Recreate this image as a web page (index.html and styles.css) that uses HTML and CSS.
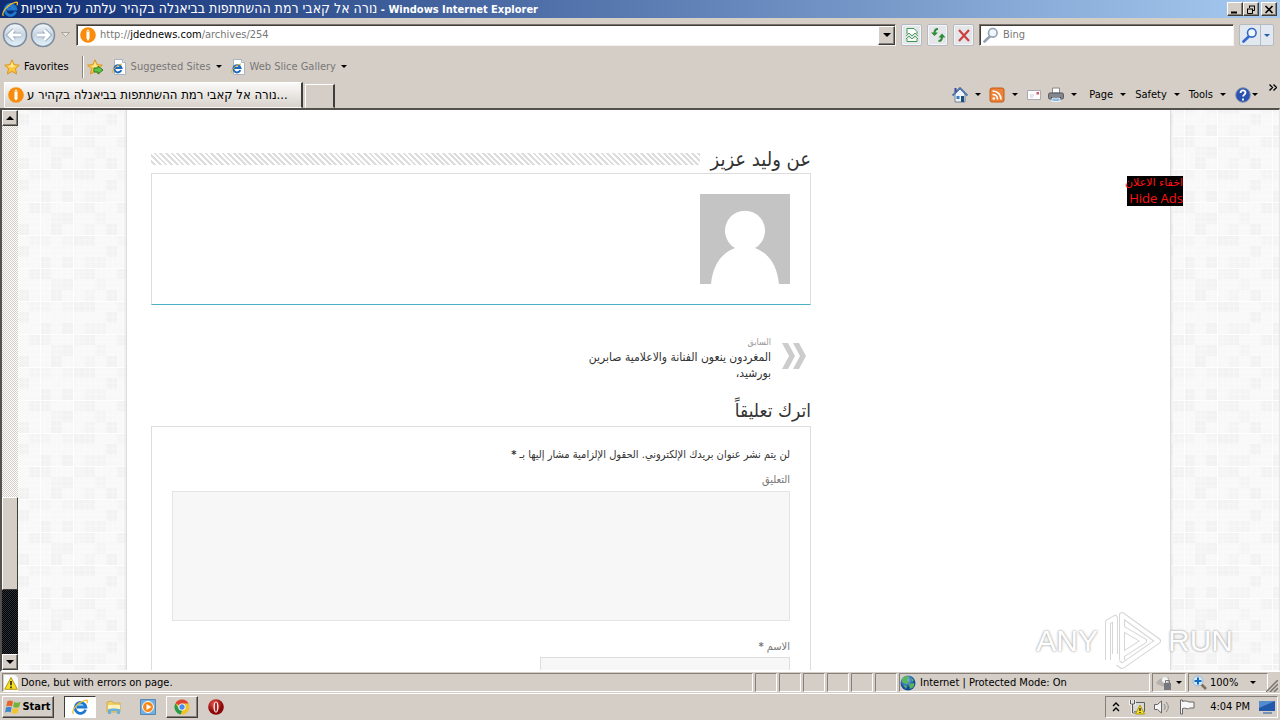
FILE: index.html
```html
<!DOCTYPE html>
<html lang="en">
<head>
<meta charset="utf-8">
<title>Windows Internet Explorer</title>
<link rel="stylesheet" href="styles.css">
</head>
<body>
<svg class="defs" width="0" height="0" aria-hidden="true">
  <defs>
    <linearGradient id="orb" x1="0" y1="0" x2="0" y2="1"><stop offset="0" stop-color="#f4f7fa"/><stop offset=".5" stop-color="#c4d3e0"/><stop offset="1" stop-color="#e4f3fb"/></linearGradient>
    <radialGradient id="globeFill" cx=".4" cy=".3"><stop offset="0" stop-color="#8fd0f5"/><stop offset="1" stop-color="#124a9c"/></radialGradient>
    <radialGradient id="redFill" cx=".4" cy=".3"><stop offset="0" stop-color="#f05a50"/><stop offset="1" stop-color="#8c0808"/></radialGradient>
    <symbol id="ie" viewBox="0 0 16 16">
      <path d="M13.6 10.6A5.4 5.4 0 1 1 13.8 8H5" fill="none" stroke="#1c78d0" stroke-width="2.8"/>
      <path d="M5 7.4C6 5 10.500 5 11.400 7.400" fill="none" stroke="#55b4f0" stroke-width="1"/>
      <path d="M1.500 14.800C-1 12 5 3 14.500 1.200C16 1.200 15.600 3 14.800 4.200" fill="none" stroke="#f2bf28" stroke-width="1.300"/>
    </symbol>
    <symbol id="iepage" viewBox="0 0 16 16">
      <path d="M3.500.5h8l3 3v12h-11z" fill="#fff" stroke="#a9b4c0"/><path d="M11.500.5v3h3" fill="#dde6ee" stroke="#a9b4c0"/>
      <path d="M10.300 11.200A3.600 3.600 0 1 1 10.500 9H4.500" fill="none" stroke="#1d67bd" stroke-width="2"/>
      <path d="M2 14C0 12 5 6 11 5" fill="none" stroke="#e8b52c"/>
    </symbol>
    <symbol id="site" viewBox="0 0 16 16"><circle cx="8" cy="8" r="7.800" fill="#f98c0c"/><path d="M8 2.300l1.500 2v7L8 14l-1.500-2.700v-7z" fill="#fff"/><path d="M6.500 4.500h3" stroke="#f98c0c" stroke-width=".6"/></symbol>
    <symbol id="star" viewBox="0 0 16 16"><path d="M8 .8l2.200 4.800 5.200.6-3.900 3.500 1.100 5.300L8 12.400 3.400 15l1.100-5.300L.6 6.200l5.200-.6z" fill="#fbc63e" stroke="#d9962a"/><path d="M8 3l1.300 3.500 3 .4-5 1.500-3.500-1.500 3-.4z" fill="#ffed9a"/></symbol>
    <symbol id="mag" viewBox="0 0 16 16"><path d="M6.800 9.500L1.500 14.500" stroke="currentColor" stroke-width="2.600" stroke-linecap="round"/><circle cx="9.800" cy="5.800" r="4.300" fill="#f0f7fc" stroke="currentColor" stroke-width="1.600"/></symbol>
    <symbol id="warn" viewBox="0 0 16 16"><path d="M3 0h9l3 3v13H1V0z" fill="#fafafa"/><path d="M8 2.500l6.300 11.800H1.700z" fill="#f8df26" stroke="#b39a10"/><path d="M8 6v4.300M8 11.500v1.700" stroke="#222" stroke-width="1.600"/></symbol>
  </defs>
</svg>

<header class="titlebar">
  <svg class="i16"><use href="#ie"/></svg>
  <h1 class="window-title"><span>נורה אל קאבי רמת ההשתתפות בביאנלה בקהיר עלתה על הציפיות</span> - Windows Internet Explorer</h1>
  <div class="window-buttons">
    <button aria-label="Minimize"><svg width="10" height="9"><path d="M1 7.500h6" stroke="#000" stroke-width="2"/></svg></button>
    <button aria-label="Restore"><svg width="10" height="9"><path d="M3 1h6M3.500 1v2M8.500 1v4.500H7M1 4h6M1.500 4v4.500h5V4" fill="none" stroke="#000"/></svg></button>
    <button class="close" aria-label="Close"><svg width="10" height="9"><path d="M1.500 1l7 7M8.500 1l-7 7" stroke="#000" stroke-width="1.600"/></svg></button>
  </div>
</header>

<nav class="navbar">
  <div class="travel">
    <button aria-label="Back"><svg width="26" height="26" viewBox="0 0 26 26"><circle cx="13" cy="13" r="11.500" fill="url(#orb)" stroke="#7c8c9e" stroke-width="1.500"/><path d="M19 13H7M12 8l-5 5 5 5" fill="none" stroke="#8fa5ba" stroke-width="4.500"/><path d="M19 13H8M12 8l-5 5 5 5" fill="none" stroke="#fff" stroke-width="2.800"/></svg></button>
    <button aria-label="Forward"><svg width="26" height="26" viewBox="0 0 26 26"><circle cx="13" cy="13" r="11.500" fill="url(#orb)" stroke="#7c8c9e" stroke-width="1.500"/><path d="M7 13h12M14 8l5 5-5 5" fill="none" stroke="#8fa5ba" stroke-width="4.500"/><path d="M7 13h11M14 8l5 5-5 5" fill="none" stroke="#fff" stroke-width="2.800"/></svg></button>
    <button class="recent" aria-label="Recent pages"><svg width="9" height="6"><path d="M.5.5h8l-4 4z" fill="#e8e4de" stroke="#aaa49c"/></svg></button>
  </div>
  <div class="address sunken">
    <svg class="i16"><use href="#site"/></svg>
    <a class="url" href="#">http://<b>jdednews.com</b>/archives/254</a>
    <button class="drop" aria-label="Show addresses"><i class="arrow"></i></button>
  </div>
  <button class="tool" aria-label="Compatibility view"><svg class="i16" viewBox="0 0 16 16"><path d="M3 7V1.500h7l3 3V7M3 12v2.500h10V12" fill="#fff" stroke="#3b9a4b"/><path d="M2 9l3-3 3 3 3-3 3 3M2 12l3-3 3 3 3-3 3 3" fill="none" stroke="#48a258"/></svg></button>
  <button class="tool" aria-label="Refresh"><svg class="i16" viewBox="0 0 16 16"><path d="M8 2C5 2 4.500 3.500 4.500 6" fill="none" stroke="#2e8c38" stroke-width="2"/><path d="M1 5.500h7L4.500 9z" fill="#2e8c38"/><path d="M8.500 14c3 0 3.500-2 3.500-4.500" fill="none" stroke="#2e8c38" stroke-width="2"/><path d="M8.500 10.500h7L12 6.500z" fill="#2e8c38"/></svg></button>
  <button class="tool" aria-label="Stop"><svg class="i16" viewBox="0 0 16 16"><path d="M3 3l10 11M13 3L3 14" stroke="#cc4040" stroke-width="2.200"/></svg></button>
  <label class="search sunken"><svg class="i16 pale"><use href="#mag"/></svg><input type="text" placeholder="Bing" aria-label="Search"></label>
  <div class="find">
    <button aria-label="Search"><svg class="i16"><use href="#mag"/></svg></button>
    <button class="more" aria-label="Search options"><i class="arrow blue"></i></button>
  </div>
</nav>

<div class="favbar">
  <button class="flat"><svg class="i16"><use href="#star"/></svg>Favorites</button>
  <div class="favlinks">
    <button class="flat" aria-label="Add to Favorites Bar"><svg class="i16" viewBox="0 0 16 16"><use href="#star"/><path d="M7 9h4V7l5 4-5 4v-2H7z" fill="#5fc44c" stroke="#2b8126"/></svg></button>
    <button class="flat grey"><svg class="i16"><use href="#iepage"/></svg>Suggested Sites<i class="arrow"></i></button>
    <button class="flat grey"><svg class="i16"><use href="#iepage"/></svg>Web Slice Gallery<i class="arrow"></i></button>
  </div>
</div>

<div class="tabbar">
  <button class="tab"><svg class="i16"><use href="#site"/></svg><span>נורה אל קאבי רמת ההשתתפות בביאנלה בקהיר ע...</span></button>
  <button class="newtab" aria-label="New tab"></button>
  <div class="commands">
    <button class="flat" aria-label="Home"><svg class="i16" viewBox="0 0 16 16"><path d="M3 7v8h10V7L8 2z" fill="#eef3f8" stroke="#6f8099"/><path d="M.5 8.500L8 1l7.500 7.500" fill="none" stroke="#4d74ab" stroke-width="1.800"/><path d="M2.500 1h2v4h-2z" fill="#394aa0"/><path d="M4.500 9h3v3h-3z" fill="#377bc1"/><path d="M9 9h3v6H9z" fill="#194f78"/></svg><i class="arrow"></i></button>
    <button class="flat" aria-label="Feeds"><svg class="i16" viewBox="0 0 16 16"><rect x="1" y="1" width="14" height="14" rx="2" fill="#ed8236" stroke="#c45c18"/><circle cx="4.800" cy="11.500" r="1.300" fill="#fff"/><path d="M3.500 7.500c3 0 5 2 5 5M3.500 4c5 0 8.500 3.500 8.500 8.500" fill="none" stroke="#fff" stroke-width="1.600"/></svg><i class="arrow"></i></button>
    <button class="flat" aria-label="Read mail"><svg class="i16" viewBox="0 0 16 16"><path d="M1.500 3.500h13v9h-13z" fill="#fcfcfc" stroke="#a9a9af"/><path d="M10.500 5h2.500v2.500h-2.500z" fill="#cf5c6c"/><path d="M4 8h4M4 10h3" stroke="#c6ccd8"/></svg></button>
    <button class="flat print" aria-label="Print"><svg class="i16" viewBox="0 0 16 16"><path d="M4.500 1h7v5h-7z" fill="#fff" stroke="#888"/><rect x=".5" y="6" width="15" height="6" rx="1.500" fill="#83868c" stroke="#55585e"/><path d="M3 10h10v2.500H3z" fill="#30353b"/><path d="M4 11h8v3.500H4z" fill="#87bce6" stroke="#eee"/></svg><i class="arrow"></i></button>
    <button class="flat text">Page<i class="arrow"></i></button>
    <button class="flat text">Safety<i class="arrow"></i></button>
    <button class="flat text">Tools<i class="arrow"></i></button>
    <button class="flat help" aria-label="Help"><svg class="i16" viewBox="0 0 16 16"><circle cx="8" cy="8" r="7.300" fill="#2a52b0" stroke="#8491ad"/><path d="M5.500 6c0-3.300 5-3.300 5-.4 0 2-2.400 2-2.400 4M8 11.500v2" fill="none" stroke="#fff" stroke-width="1.800"/></svg><i class="arrow"></i></button>
    <button class="flat chevron" aria-label="More commands"><svg width="8" height="7"><path d="M.5.500l3 3-3 3M4.500.5l3 3-3 3" fill="none" stroke="#000" stroke-width="1.300"/></svg></button>
  </div>
</div>

<main class="viewport">
  <div class="scrollbar" aria-hidden="true">
    <span class="sb-button"><i class="arrow up"></i></span>
    <span class="sb-track"></span>
    <span class="sb-thumb"></span>
    <span class="sb-pressed"></span>
    <span class="sb-button"><i class="arrow"></i></span>
  </div>
  <div class="page">
    <svg class="texture" width="100%" height="100%" aria-hidden="true">
      <defs><pattern id="tiles" width="88" height="66" patternUnits="userSpaceOnUse" x="22" y="26">
        <rect width="88" height="66" fill="#f8f8f8"/>
        <path d="M0 0h11v11H0zM22 11h11v11H22zM44 0h11v11H44zM66 22h11v11H66zM11 22h11v11H11zM33 33h22v11H33zM0 55h11v11H0zM66 44h11v11H66zM22 55h11v11H22zM77 0h11v11H77z" fill="#f2f2f2"/>
        <path d="M11 11h11v11H11zM33 0h11v11H33zM55 11h11v11H55zM44 22h11v11H44zM0 33h11v11H0zM55 55h11v11H55zM22 33h11v11H22zM77 33h11v11H77zM44 55h11v11H44z" fill="#f4f4f4"/>
        <path d="M0 .5h88M0 33.500h88M.5 0v66M33.500 0v66" stroke="#fefefe"/>
        <path d="M0 4h88M0 8h88M0 15h88M0 20h88M0 26h88M0 38h88M0 43h88M0 49h88M0 54h88M0 60h88M5 0v66M10 0v66M17 0v66M22 0v66M28 0v66M39 0v66M45 0v66M50 0v66M56 0v66M62 0v66M67 0v66M73 0v66M78 0v66M83 0v66" stroke="#fff" stroke-opacity=".3"/>
      </pattern></defs>
      <rect width="100%" height="100%" fill="url(#tiles)"/>
    </svg>
    <div class="sheet">
      <article class="column" dir="rtl" lang="ar">
        <section>
          <div class="heading"><h2>عن وليد عزيز</h2><span class="stripes"></span></div>
          <div class="box author">
            <svg width="90" height="90" viewBox="0 0 90 90" role="img" aria-label="وليد عزيز"><path fill="#c4c4c4" d="M0 0h90v90H0z"/><path fill="#fff" d="M11 90C13 70 22 59 35 54a20 20 0 1 1 20 0C68 59 77 70 79 90z"/></svg>
          </div>
        </section>
        <a class="previous" href="#">
          <svg width="26" height="28" viewBox="0 0 26 28"><path d="M1 1h6l7 13-7 13H1l7-13zM12 1h6l7 13-7 13h-6l7-13z" fill="#ccc"/></svg>
          <span><small>السابق</small>المغردون ينعون الفنانة والاعلامية صابرين بورشيد،</span>
        </a>
        <section>
          <h2 class="reply">اترك تعليقاً</h2>
          <form class="box comment">
            <p>لن يتم نشر عنوان بريدك الإلكتروني. الحقول الإلزامية مشار إليها بـ <b>*</b></p>
            <label for="comment">التعليق</label>
            <textarea id="comment"></textarea>
            <label for="author">الاسم <b>*</b></label>
            <input id="author" type="text">
          </form>
        </section>
      </article>
    </div>
    <button class="hide-ads"><span lang="ar">اخفاء الاعلان</span><span>Hide Ads</span></button>
    <div class="watermark"><span>ANY</span>
      <svg width="58" height="62" viewBox="0 0 58 62"><path d="M4 50V12l7-4v36M18 50V5l36 26-36 25-4-3M18 18l22 13-22 14" fill="none" stroke="#d2d2d2" stroke-width="6" stroke-linejoin="round"/><path d="M4 50V12l7-4v36M18 50V5l36 26-36 25-4-3M18 18l22 13-22 14" fill="none" stroke="#fff" stroke-width="4" stroke-linejoin="round"/></svg>
      <span>RUN</span></div>
  </div>
</main>

<footer class="statusbar">
  <div class="pane grow"><svg class="i16"><use href="#warn"/></svg>Done, but with errors on page.</div>
  <div class="pane"></div><div class="pane"></div><div class="pane"></div><div class="pane"></div><div class="pane"></div><div class="pane"></div>
  <div class="pane zone"><svg class="i16" viewBox="0 0 16 16"><circle cx="8" cy="8" r="7.500" fill="url(#globeFill)"/><path d="M2 4c3-4 6-3 7-2L7 5l2 2-3 2-4-2zM9 9l5-1c1 3-1 5-4 6zM11 3l3 2-2 2zM3 10l4 1-1 3z" fill="#59b65b"/></svg>Internet | Protected Mode: On</div>
  <button class="pane lock" aria-label="Privacy"><svg class="i16" viewBox="0 0 16 16"><path d="M0 8C3 3 8 2 13 2v11C9 11 4 12 0 8z" fill="#b6b3ae"/><circle cx="9" cy="5" r="3" fill="#f5f5f5"/><path d="M8 8h7v7H8z" fill="#75797e"/><path d="M9.500 8V5.500h4V8" fill="none" stroke="#777"/></svg><i class="arrow"></i></button>
  <button class="pane zoom"><svg class="i16" viewBox="0 0 16 16"><path d="M9 9l5 5" stroke="#806f54" stroke-width="2.500"/><circle cx="6" cy="6" r="5" fill="#d3e9fb" stroke="#9fb9d3"/><path d="M6 2.500v7M2.500 6h7" stroke="#126bc2" stroke-width="2"/></svg>100%<i class="arrow"></i></button>
  <svg class="grip" width="12" height="12"><path d="M0 12L12 0M4 12l8-8M8 12l4-4" stroke="#77736d" stroke-width="1.500"/></svg>
</footer>

<footer class="taskbar">
  <button class="start"><svg class="i16" viewBox="0 0 16 16"><path d="M2.500 2C5 1 6 1.500 8 2.500L7 7.500C5 6.500 3.500 6.500 1.200 7.500z" fill="#e5652b"/><path d="M9 3c2 1 4 1 6.500 0l-1.300 5c-2.500 1-4 1-6 0z" fill="#74b33a"/><path d="M1 8.500c2.500-1 3.800-1 5.700 0l-1.200 5C4 12.500 2 12.700 0 13.500z" fill="#3f86d0"/><path d="M7.700 9c2 1 3.500 1 6.200 0l-1.300 5c-2.500 1-4.200 1-6.100 0z" fill="#f4c430"/></svg>Start</button>
  <button class="task active" aria-label="Internet Explorer"><svg class="i16"><use href="#ie"/></svg></button>
  <button class="task" aria-label="Explorer"><svg class="i16" viewBox="0 0 16 16"><path d="M1 3l5-1 1 2h7v9H1z" fill="#efcf6c" stroke="#d3ac46"/><path d="M2 6h12v4H2z" fill="#fff2b8"/><path d="M2 15v-4c0-2 12-2 12 0v4h-3v-3H5v3z" fill="#65b0e0"/></svg></button>
  <button class="task" aria-label="Media Player"><svg class="i16" viewBox="0 0 16 16"><path d="M.5.5h15v15H.5z" fill="#70b0e5" stroke="#5687b5"/><circle cx="8" cy="8" r="5.500" fill="#f68718" stroke="#fff"/><path d="M6.500 5l5 3-5 3z" fill="#fff"/></svg></button>
  <button class="task raised" aria-label="Chrome"><svg class="i16" viewBox="0 0 16 16"><circle cx="8" cy="8" r="7.500" fill="#efc427"/><path d="M8 8L1.500 4.200A7.500 7.500 0 0 1 14.500 4.500H8z" fill="#dd4437"/><path d="M1.500 4.200L5 10l3 2-1.500 3.400A7.500 7.500 0 0 1 1.500 4.200z" fill="#279c51"/><circle cx="8" cy="8" r="3.600" fill="#fff"/><circle cx="8" cy="8" r="2.700" fill="#4b8cf0"/></svg></button>
  <button class="task" aria-label="Opera"><svg class="i16" viewBox="0 0 16 16"><circle cx="8" cy="8" r="7.800" fill="url(#redFill)"/><ellipse cx="8" cy="8" rx="2.500" ry="5.500" fill="#fff"/><ellipse cx="8" cy="8" rx="1.200" ry="4.800" fill="#b52424"/></svg></button>
  <div class="tray">
    <svg width="8" height="10"><path d="M1 4l3-3 3 3M1 9l3-3 3 3" fill="none" stroke="#000" stroke-width="1.400"/></svg>
    <svg class="i16" viewBox="0 0 16 16"><path d="M4.500 3.500h11v9h-11z" fill="#d9d9d6" stroke="#5d5d5d"/><path d="M1.500 1v4h4V1M3.500 5v9h5" fill="none" stroke="#fff" stroke-width="2.400"/><path d="M1.500 1v4h4V1M3.500 5v9h5" fill="none" stroke="#555"/><path d="M11 6l4.500 9h-9z" fill="#f7df2e" stroke="#ae980b"/><path d="M11 9v3M11 13v1" stroke="#222" stroke-width="1.300"/></svg>
    <svg class="i16" viewBox="0 0 16 16"><path d="M.5 5.500h3L7.500 2v12l-4-3.500h-3z" fill="#f4f4f4" stroke="#666"/><path d="M10 5c1.500 2 1.500 4 0 6M12 3c3 3 3 7 0 10" fill="none" stroke="#888"/></svg>
    <svg class="i16" viewBox="0 0 16 16"><path d="M1.500 1v14h2V9.500c3-1 4 .5 6 .5l1-1h4.500V3H10c-2-1-4-1.500-6.500-.5V1z" fill="#f7f7f7" stroke="#666"/></svg>
    <time>4:04 PM</time>
    <svg class="i16" viewBox="0 0 16 16"><path d="M0 2h16v10H0z" fill="#2359aa"/><path d="M0 2h16L0 9z" fill="#538cce"/><path d="M4 13h9v2H4z" fill="#7693b5"/></svg>
  </div>
</footer>
</body>
</html>
```

FILE: styles.css
```css
* { box-sizing: border-box; }
body {
  margin: 0;
  height: 100vh;
  display: flex;
  flex-direction: column;
  overflow: hidden;
  background: #d5cec7;
  color: #000;
  font: 11px/14px "DejaVu Sans Condensed", "DejaVu Sans", sans-serif;
}
button, input, textarea { font: inherit; color: inherit; }
button { padding: 0; border: 0; background: none; display: flex; align-items: center; justify-content: center; white-space: nowrap; }
svg { flex: none; display: block; }
.defs { position: absolute; }
.i16 { width: 16px; height: 16px; }
.sunken { background: #fff; border: 1px solid; border-color: #77736b #f5f3ef #f5f3ef #77736b; box-shadow: inset 1px 1px #403e3a; }

.arrow { width: 0; height: 0; border: 3px solid transparent; border-top-color: #000; border-bottom: 0; }
.arrow.blue { border-top-color: #2360a8; }
.arrow.up { border: 4px solid transparent; border-top: 0; border-bottom-color: #000; }

.titlebar { display: flex; align-items: center; flex: none; height: 18px; padding: 0 3px 0 2px; gap: 3px; background: linear-gradient(90deg, #0f2d74, #a6caf0); color: #fff; }
.window-title { margin: 0; flex: 1; font-size: 11px; line-height: 16px; font-weight: bold; white-space: nowrap; }
.window-title span { font-size: 14px; font-weight: normal; }
.window-buttons { display: flex; }
.window-buttons button, .sb-button, .drop, .start, .raised { background: #d5cec7; border: 1px solid; border-color: #fff #403e3a #403e3a #fff; box-shadow: inset -1px -1px #85817a; }
.window-buttons button { width: 16px; height: 14px; }
.window-buttons .close { margin-left: 2px; }

.navbar { display: flex; align-items: center; flex: none; height: 34px; padding: 0 6px 0 2px; gap: 5px; }
.travel { display: flex; align-items: center; gap: 2px; width: 69px; flex: none; }
.recent { margin-left: 3px; }
.address { flex: 1; display: flex; align-items: center; height: 22px; padding-left: 3px; gap: 4px; }
.url { flex: 1; color: #777; text-decoration: none; }
.url b { font-weight: normal; color: #000; }
.drop { width: 17px; height: 19px; }
.drop .arrow { border-width: 4px 4px 0; }
.tool { width: 21px; height: 22px; border: 1px solid #b5bac2; border-radius: 2px; background: #e5e6e9; box-shadow: inset 0 0 0 1px #f5f6f8; }
.search { width: 255px; height: 22px; display: flex; align-items: center; gap: 4px; padding-left: 3px; }
.search input { flex: 1; min-width: 0; border: 0; padding: 0; outline: 0; background: transparent; }
.search input::placeholder { color: #777; opacity: 1; }
.pale { color: #93a2b4; }
.find { display: flex; height: 22px; border: 1px solid #b5bac2; border-radius: 2px; background: #e2e8f0; color: #3268ca; }
.find button { width: 20px; }
.find .more { width: 13px; border-left: 1px solid #b5bac2; }

.favbar { display: flex; align-items: center; flex: none; height: 29px; padding-left: 4px; gap: 13px; }
.flat { gap: 4px; }
.favlinks { display: flex; align-items: center; height: 22px; gap: 8px; padding-left: 4px; border-left: 1px solid #8a857d; box-shadow: inset 1px 0 #fff; }
.favlinks .arrow { margin-left: 1px; }
.grey { color: #777; }

.tabbar { display: flex; align-items: flex-end; flex: none; height: 27px; padding: 0 3px 0 4px; }
.tab { width: 299px; height: 26px; flex: none; justify-content: flex-start; gap: 3px; padding-left: 3px; border: 1px solid; border-color: #fff #403e3a transparent #fff; border-right-width: 2px; background: linear-gradient(#fafaf9, #d8d2cb); }
.tab span { font-size: 13px; }
.newtab { width: 30px; height: 24px; margin-left: 2px; border: 1px solid; border-color: #fff #403e3a transparent #fff; border-right-width: 2px; }
.commands { display: flex; align-items: center; height: 27px; margin-left: auto; gap: 6px; }
.commands .arrow { margin: 0 2px 0 3px; }
.commands .text .arrow { margin: 0 3px 0 3px; }
.commands .print { margin-right: 4px; }
.commands .help { gap: 0; }
.commands .help .arrow { margin-left: 1px; }
.chevron { align-self: flex-start; padding-top: 3px; margin-left: 3px; }

.viewport { flex: 1; min-height: 0; display: flex; border: 2px solid; border-color: #54514d #e9e5e0 #fff #54514d; border-right-width: 1px; }
.scrollbar { width: 16px; flex: none; display: flex; flex-direction: column; background: #d5cec7; }
.sb-button { height: 16px; display: flex; flex: none; align-items: center; justify-content: center; }
.sb-button .arrow:not(.up) { border-width: 4px 4px 0; }
.sb-track { flex: 373; background: repeating-conic-gradient(#fff 0 25%, #d5cec7 0 50%) 0 0 / 2px 2px; }
.sb-thumb { flex: 92; background: #d5cec7; border: 1px solid; border-color: #fff #403e3a #403e3a #fff; }
.sb-pressed { flex: 64; background: repeating-conic-gradient(#000 0 25%, #2b3138 0 50%) 0 0 / 2px 2px; }
.page { flex: 1; position: relative; overflow: hidden; }
.texture { position: absolute; inset: 0; }
.sheet { position: relative; max-width: 1045px; height: 100%; margin: 0 auto; padding: 38px 24px 0; background: #fff; border: 1px solid #ddd; border-width: 0 1px; box-shadow: 0 0 3px #ddd; overflow: hidden; }
.column { max-width: 660px; color: #333; font-size: 12px; line-height: 16px; }
.heading { display: flex; align-items: center; gap: 10px; height: 25px; padding-bottom: 3px; }
h2 { margin: 0; font-size: 20px; line-height: 22px; font-weight: normal; }
.reply { height: 27px; font-size: 19px; }
.stripes { flex: 1; height: 12px; background: repeating-linear-gradient(45deg, #fff 0 2px, #ddd 2px 4px); }
.box { border: 1px solid #ddd; padding: 20px; }
.author { border-bottom-color: #4bb0c4; }
.previous { display: flex; gap: 10px; margin: 30px 4px 18px 0; width: 224px; min-height: 46px; color: #333; text-decoration: none; }
.previous svg { margin-top: 7px; }
.previous small { display: block; font-size: 9px; line-height: 14px; color: #999; }
.comment { height: 300px; display: flex; flex-direction: column; align-items: flex-start; }
.comment p { margin: 0 0 9px; font-size: 11px; }
.comment label { font-size: 11px; color: #777; }
.comment textarea { width: 100%; height: 130px; margin: 3px 0 18px; flex: none; resize: none; border: 1px solid #e4e4e4; background: #f7f7f7; }
.comment input { width: 250px; height: 30px; flex: none; margin-top: 2px; border: 1px solid #ddd; background: #f7f7f7; }

.hide-ads { position: absolute; top: 66px; right: 96px; width: 56px; height: 30px; flex-direction: column; align-items: flex-end; background: #000; color: #f11; font: 13px/16px "Open Sans", sans-serif; }
.hide-ads span[lang] { font: 11px/14px "DejaVu Sans", sans-serif; }
.watermark { position: absolute; right: 46px; bottom: -2px; display: flex; align-items: center; gap: 6px; color: #fff; font: 30px/44px "Liberation Sans", sans-serif; text-shadow: 0 0 2px #999, 0 0 3px #bbb; opacity: 0.9; }

.statusbar { display: flex; align-items: center; flex: none; height: 22px; padding: 0 2px; gap: 2px; border-bottom: 1px solid #fff; }
.pane { width: 22px; height: 19px; display: flex; align-items: center; justify-content: flex-start; gap: 4px; border: 1px solid; border-color: #85817a #fff #fff #85817a; white-space: nowrap; }
.grow { flex: 1; gap: 2px; }
.zone { width: 251px; }
.lock { width: 34px; padding-left: 3px; }
.zoom { width: 80px; padding-left: 3px; gap: 2px; }
.zoom .arrow { margin-left: auto; margin-right: 11px; }
.grip { margin-top: 6px; margin-left: -4px; }

.taskbar { display: flex; align-items: center; flex: none; height: 26px; padding: 0 2px; }
.start { width: 52px; height: 22px; margin-right: 10px; gap: 1px; font-weight: bold; }
.task { width: 32px; height: 22px; margin-right: 2px; }
.active { background: #fff; border: 1px solid; border-color: #403e3a #fff #fff #403e3a; }
.tray { margin-left: auto; display: flex; align-items: center; gap: 9px; width: 173px; height: 22px; padding: 0 2px 0 6px; border: 1px solid; border-color: #85817a #fff #fff #85817a; }
.tray time { margin-left: auto; }
```
